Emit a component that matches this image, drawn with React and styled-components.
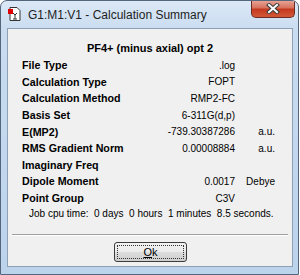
import React from "react";
import styled, { createGlobalStyle } from "styled-components";

const Global = createGlobalStyle`
  html, body {
    margin: 0;
    padding: 0;
    background: #ffffff;
  }
  body {
    font-family: "Liberation Sans", Arial, sans-serif;
  }
`;

const Frame = styled.div`
  width: 299px;
  height: 275px;
  box-sizing: border-box;
  border: 1px solid #54667c;
  border-radius: 7px 7px 0 0;
  background: linear-gradient(to bottom, #dbe8f6 0px, #c9dcf0 30px, #bcd3ec 100%);
  display: flex;
  flex-direction: column;
  overflow: hidden;
`;

const TitleBar = styled.div`
  height: 27px;
  display: flex;
  align-items: flex-start;
  padding-left: 6px;
  box-sizing: border-box;
`;

const TitleIcon = styled.svg`
  width: 16px;
  height: 16px;
  margin-top: 5px;
  flex: none;
`;

const TitleText = styled.div`
  margin-left: 5px;
  margin-top: 7px;
  font-size: 12px;
  color: #1e1e1e;
  flex: 1;
`;

const CloseButton = styled.div`
  width: 44px;
  height: 18px;
  margin-right: 3px;
  margin-top: -1px;
  box-sizing: border-box;
  border: 1px solid #6b2a22;
  border-top: none;
  border-radius: 0 0 5px 5px;
  background: linear-gradient(to bottom, #e9a99a 0%, #d7735f 45%, #c5391e 55%, #d25837 100%);
  display: flex;
  align-items: center;
  justify-content: center;
`;

const Client = styled.div`
  flex: 1;
  margin: 0 5px 7px 6px;
  border: 1px solid #8da0b6;
  background: #f0f0f0;
  display: flex;
  flex-direction: column;
`;

const Heading = styled.div`
  text-align: center;
  font-weight: bold;
  font-size: 11px;
  color: #000;
  height: 16px;
  line-height: 16px;
  margin-top: 11px;
  margin-bottom: 1px;
`;

const Table = styled.div`
  display: grid;
  grid-template-columns: 14px 125px 88px 40px;
  grid-auto-rows: 16.6px;
  align-items: center;
  color: #000;
`;

const Label = styled.div`
  grid-column: 2;
  font-weight: bold;
  font-size: 10.7px;
  white-space: nowrap;
`;

const Value = styled.div`
  grid-column: 3;
  text-align: right;
  font-size: 10px;
  white-space: nowrap;
`;

const Unit = styled.div`
  grid-column: 4;
  text-align: right;
  font-size: 10px;
  white-space: nowrap;
`;

const CpuLine = styled.div`
  font-size: 10px;
  color: #000;
  height: 16.6px;
  line-height: 16.6px;
  padding-left: 21px;
  white-space: pre;
`;

const Separator = styled.div`
  margin: 11px 4px 0 4px;
  border-top: 1px solid #a0a0a0;
  border-bottom: 1px solid #ffffff;
`;

const ButtonRow = styled.div`
  display: flex;
  justify-content: center;
  padding-top: 6px;
`;

const OkButton = styled.button`
  width: 73px;
  height: 20px;
  box-sizing: border-box;
  border: 1px solid #3c3c3c;
  border-radius: 3px;
  background: linear-gradient(to bottom, #f2f2f2 0%, #ebebeb 50%, #dddddd 51%, #cfcfcf 100%);
  padding: 2px;
  font-family: "Liberation Sans", Arial, sans-serif;
  font-size: 11px;
  color: #000;
  margin-left: 1px;
`;

const Focus = styled.div`
  height: 100%;
  box-sizing: border-box;
  border: 1px dotted #333;
  display: flex;
  align-items: center;
  justify-content: center;
`;

const rows = [
  { label: "File Type", value: ".log" },
  { label: "Calculation Type", value: "FOPT" },
  { label: "Calculation Method", value: "RMP2-FC" },
  { label: "Basis Set", value: "6-311G(d,p)" },
  { label: "E(MP2)", value: "-739.30387286", unit: "a.u." },
  { label: "RMS Gradient Norm", value: "0.00008884", unit: "a.u." },
  { label: "Imaginary Freq", value: "" },
  { label: "Dipole Moment", value: "0.0017", unit: "Debye" },
  { label: "Point Group", value: "C3V" },
];

const App = () => (
  <>
    <Global />
    <Frame>
      <TitleBar>
        <TitleIcon viewBox="0 0 16 16">
          <path d="M3 1.5h7l3 3v10H3z" fill="#fff" stroke="#333" />
          <path d="M6 7l2 2 2-2M8 9v4M6 13h4" fill="none" stroke="#333" />
          <rect x="1" y="3" width="5" height="5" fill="#e00000" />
        </TitleIcon>
        <TitleText>G1:M1:V1 - Calculation Summary</TitleText>
        <CloseButton>
          <svg width="14" height="11" viewBox="0 0 14 11">
            <path d="M3 2l8 7M11 2l-8 7" stroke="#3a3a3a" strokeWidth="4" strokeLinecap="square" />
            <path d="M3 2l8 7M11 2l-8 7" stroke="#ffffff" strokeWidth="2" strokeLinecap="square" />
          </svg>
        </CloseButton>
      </TitleBar>
      <Client>
        <Heading>PF4+ (minus axial) opt 2</Heading>
        <Table>
          {rows.map((r) => (
            <React.Fragment key={r.label}>
              <Label>{r.label}</Label>
              <Value>{r.value}</Value>
              <Unit>{r.unit || ""}</Unit>
            </React.Fragment>
          ))}
        </Table>
        <CpuLine>{"Job cpu time:  0 days  0 hours  1 minutes  8.5 seconds."}</CpuLine>
        <Separator />
        <ButtonRow>
          <OkButton>
            <Focus>
              <span>
                <u>O</u>k
              </span>
            </Focus>
          </OkButton>
        </ButtonRow>
      </Client>
    </Frame>
  </>
);

export default App;
